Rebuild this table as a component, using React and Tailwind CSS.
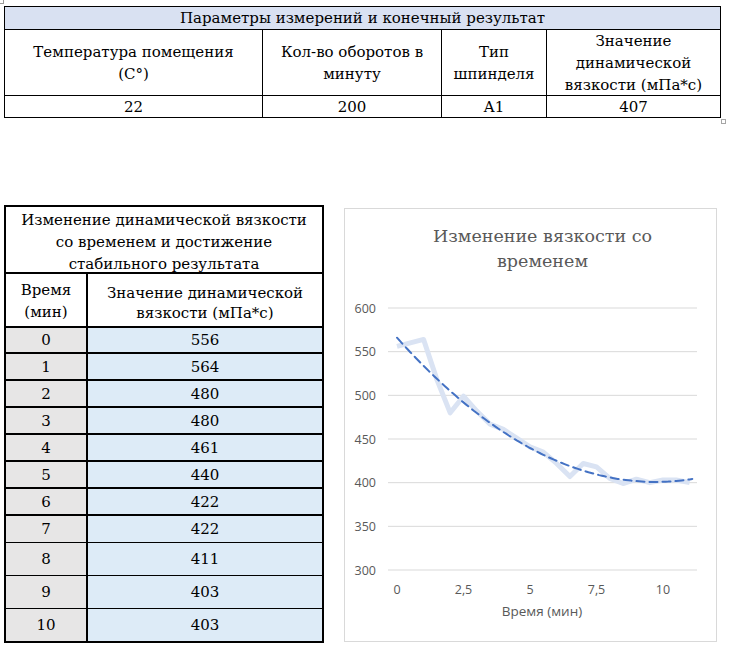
import React from "react";

const X = (t) => 397 + t * 26.6;
const Y = (v) => 570 - (v - 300) * 0.8733;

const data = [
  [0, 556], [1, 564], [1.5, 518], [2, 480], [2.5, 499], [3, 482], [3.5, 467], [4, 461],
  [4.5, 451], [5, 441], [5.5, 435], [6, 422], [6.5, 407], [7, 422], [7.5, 418], [8, 405],
  [8.5, 399], [9, 404], [9.5, 400], [10, 403], [10.5, 403], [11, 400],
];

function trendPoints() {
  const pts = [];
  for (let i = 0; i <= 111; i++) {
    const t = i / 10;
    const v = 566 - 34 * t + 1.75 * t * t;
    pts.push(`${X(t).toFixed(1)},${Y(v).toFixed(1)}`);
  }
  return pts.join(" ");
}

function Chart() {
  const ticks = [600, 550, 500, 450, 400, 350, 300];
  const xt = [
    [0, "0"], [2.5, "2,5"], [5, "5"], [7.5, "7,5"], [10, "10"],
  ];
  return (
    <div className="mt-[3px] w-[373px] h-[434px] border border-[#d9d9d9] flex flex-col bg-white">
      <div className="pt-[15px] pl-[24px] text-center text-[17.5px] leading-[25px] text-[#595959]">
        Изменение вязкости со
        <br />
        временем
      </div>
      <svg width="371" height="366" viewBox="345 274 371 366" className="block">
        {ticks.map((v) => (
          <g key={v}>
            <line x1="388" x2="697" y1={Y(v)} y2={Y(v)} stroke="#d9d9d9" strokeWidth="1" />
            <text
              x="376"
              y={Y(v)}
              textAnchor="end"
              dominantBaseline="central"
              fontFamily="'Open Sans', sans-serif"
              fontSize="12.5"
              fill="#595959"
            >
              {v}
            </text>
          </g>
        ))}
        {xt.map(([t, s]) => (
          <text
            key={s}
            x={X(t)}
            y="589"
            textAnchor="middle"
            dominantBaseline="central"
            fontFamily="'Open Sans', sans-serif"
            fontSize="12.5"
            fill="#595959"
          >
            {s}
          </text>
        ))}
        <text
          x="542"
          y="611"
          textAnchor="middle"
          dominantBaseline="central"
          fontFamily="'Open Sans', sans-serif"
          fontSize="13.5"
          fill="#595959"
        >
          Время (мин)
        </text>
        <polyline
          points={data.map(([t, v]) => `${X(t)},${Y(v)}`).join(" ")}
          fill="none"
          stroke="#dae3f3"
          strokeWidth="5"
          strokeLinejoin="round"
        />
        <polyline
          points={trendPoints()}
          fill="none"
          stroke="#4472c4"
          strokeWidth="2"
          strokeDasharray="8 5"
          strokeLinecap="round"
        />
      </svg>
    </div>
  );
}

function TopTable() {
  return (
    <div className="w-[717px] border-l border-t border-black leading-[22px]">
      <div className="h-[23px] bg-[#d9e1f2] border-r border-b border-black flex items-center justify-center">
        Параметры измерений и конечный результат
      </div>
      <div className="flex h-[66px]">
        <div className="w-[258px] border-r border-b border-black flex items-center justify-center text-center">
          <span>
            Температура помещения
            <br />
            (C°)
          </span>
        </div>
        <div className="w-[179px] border-r border-b border-black flex items-center justify-center text-center">
          <span>
            Кол-во оборотов в
            <br />
            минуту
          </span>
        </div>
        <div className="w-[105px] border-r border-b border-black flex items-center justify-center text-center">
          <span>
            Тип
            <br />
            шпинделя
          </span>
        </div>
        <div className="w-[174px] border-r border-b border-black flex items-center justify-center text-center">
          <span>
            Значение
            <br />
            динамической
            <br />
            вязкости (мПа*с)
          </span>
        </div>
      </div>
      <div className="flex h-[22px]">
        <div className="w-[258px] border-r border-b border-black flex items-center justify-center">22</div>
        <div className="w-[179px] border-r border-b border-black flex items-center justify-center">200</div>
        <div className="w-[105px] border-r border-b border-black flex items-center justify-center">A1</div>
        <div className="w-[174px] border-r border-b border-black flex items-center justify-center">407</div>
      </div>
    </div>
  );
}

const rows = [
  ["0", "556", "h-[26px] border-b-2"],
  ["1", "564", "h-[27px] border-b-2"],
  ["2", "480", "h-[27px] border-b-2"],
  ["3", "480", "h-[27px] border-b-2"],
  ["4", "461", "h-[27px] border-b-2"],
  ["5", "440", "h-[27px] border-b-2"],
  ["6", "422", "h-[27px] border-b-2"],
  ["7", "422", "h-[27px] border-b"],
  ["8", "411", "h-[33px] border-b"],
  ["9", "403", "h-[33px] border-b"],
  ["10", "403", "h-[32px]"],
];

function LeftTable() {
  return (
    <div className="w-[320px] border-2 border-black leading-[22px]">
      <div className="h-[67px] border-b-2 border-black flex items-center justify-center text-center pt-[4px]">
        <span>
          Изменение динамической вязкости
          <br />
          со временем и достижение
          <br />
          стабильного результата
        </span>
      </div>
      <div className="h-[54px] border-b-2 border-black flex">
        <div className="w-[82px] border-r-2 border-black flex items-center justify-center text-center pt-[1px]">
          <span>
            Время
            <br />
            (мин)
          </span>
        </div>
        <div className="flex-1 flex items-center justify-center text-center leading-[20px] pt-[6px]">
          <span>
            Значение динамической
            <br />
            вязкости (мПа*с)
          </span>
        </div>
      </div>
      {rows.map(([t, v, cls]) => (
        <div key={t} className={`flex border-black ${cls}`}>
          <div className="w-[82px] bg-[#e7e6e6] border-r-2 border-black flex items-center justify-center">
            {t}
          </div>
          <div className="flex-1 bg-[#ddebf7] flex items-center justify-center">{v}</div>
        </div>
      ))}
    </div>
  );
}

export default function App() {
  return (
    <div className="relative w-[753px] h-[654px] bg-white overflow-hidden font-['DejaVu_Serif',serif] text-[15px] text-black">
      <div className="absolute -left-[4px] -top-[4px] w-[8px] h-[8px] border border-[#9a9a9a]" />
      <div className="pt-[6px] pl-[4px]">
        <TopTable />
      </div>
      <div className="absolute left-[721px] top-[119px] w-[5px] h-[5px] border border-[#a6a6a6]" />
      <div className="flex items-start mt-[87px] pl-[4px] gap-[20px]">
        <LeftTable />
        <Chart />
      </div>
    </div>
  );
}
